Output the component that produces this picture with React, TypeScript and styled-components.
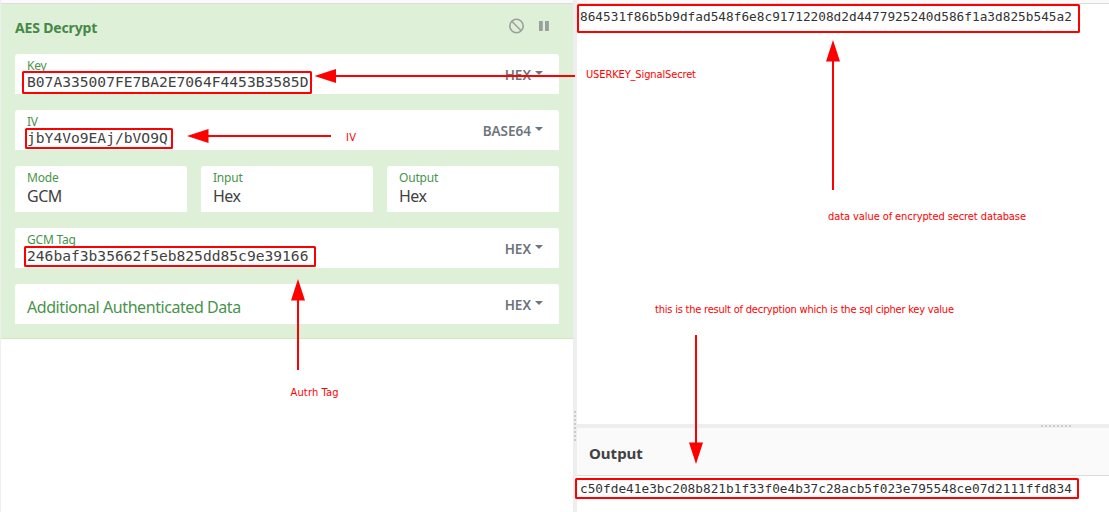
import React from 'react';
import styled, { createGlobalStyle } from 'styled-components';

const GlobalStyle = createGlobalStyle`
  * { box-sizing: border-box; }
  body {
    margin: 0;
    background: #fff;
    font-family: "Noto Sans", "Open Sans", sans-serif;
    color: #424242;
    overflow: hidden;
  }
`;

const Page = styled.div`
  position: relative;
  display: flex;
  width: 1109px;
  height: 512px;
  overflow: hidden;
  white-space: nowrap;
`;

const RecipePane = styled.section`
  width: 573px;
  border-left: 1px solid #eee;
`;

const PaneTop = styled.div`
  height: 4px;
  background: #fafafa;
  border-bottom: 1px solid #ddd;
`;

const Operation = styled.div`
  display: flex;
  flex-direction: column;
  gap: 16px;
  height: 335px;
  padding: 13px 14px 0;
  background: #dff0d8;
  border-bottom: 1px solid #d0e6bd;
`;

const OperationHead = styled.div`
  display: flex;
  justify-content: space-between;
  align-items: center;
  height: 21px;
`;

const Title = styled.h2`
  margin: 0;
  font-size: 14px;
  line-height: 20px;
  font-weight: 700;
  letter-spacing: -0.16px;
  color: #468847;
`;

const HeadIcons = styled.div`
  display: flex;
  align-items: center;
  gap: 14px;
  margin-top: -3px;
  padding-right: 10px;
`;

const Field = styled.div`
  display: flex;
  justify-content: space-between;
  height: 40px;
  padding: 0 16px 0 12px;
  background: #fff;
  border-radius: 3px 3px 0 0;
`;

const FieldBody = styled.div`
  display: flex;
  flex-direction: column;
  padding-top: 4px;
`;

const Label = styled.span`
  font-size: 12px;
  line-height: 16px;
  letter-spacing: -0.2px;
  color: #48944b;
`;

const MonoValue = styled.span`
  font-family: "DejaVu Sans Mono", monospace;
  font-size: 14.62px;
  line-height: 15px;
`;

const Placeholder = styled.span`
  padding-top: 11px;
  font-size: 16px;
  line-height: 24px;
  letter-spacing: -0.43px;
  color: #48944b;
`;

const Encoding = styled.span`
  display: flex;
  align-items: center;
  gap: 4px;
  height: 42px;
  font-size: 13.5px;
  font-weight: 600;
  letter-spacing: 0;
  color: #6c757d;
  &::after {
    content: "";
    border: 4px solid transparent;
    border-top-color: #6c757d;
    border-bottom: 0;
    margin-top: -4px;
  }
`;

const SelectRow = styled.div`
  display: grid;
  grid-template-columns: repeat(3, 1fr);
  gap: 14px;
`;

const SelectField = styled(Field)`
  height: 46px;
`;

const SelectValue = styled.span`
  font-size: 16px;
  line-height: 20px;
  letter-spacing: -0.5px;
`;

const Gutter = styled.div`
  display: flex;
  flex-direction: column;
  align-items: center;
  width: 4px;
  padding-top: 411px;
  background: #eee;
`;

const Dots = styled.div<{ $vertical?: boolean }>`
  width: ${p => (p.$vertical ? '2px' : '30px')};
  height: ${p => (p.$vertical ? '30px' : '2px')};
  background: repeating-linear-gradient(
    ${p => (p.$vertical ? '180deg' : '90deg')}, #ccc 0 2px, transparent 2px 4px
  );
`;

const IoPane = styled.section`
  display: flex;
  flex-direction: column;
  flex: 1;
`;

const InputText = styled.div`
  height: 420px;
  padding: 4px 3px;
`;

const IoText = styled.span`
  display: block;
  font-family: "DejaVu Sans Mono", monospace;
  font-size: 12.78px;
  line-height: 18px;
  color: #333;
`;

const RowGutter = styled.div`
  display: flex;
  justify-content: flex-end;
  align-items: center;
  height: 4px;
  padding-right: 38px;
  background: #eee;
`;

const OutputHead = styled.h2`
  height: 48px;
  margin: 0;
  padding: 0 12px;
  background: #fafafa;
  border-bottom: 1px solid #ddd;
  font-size: 15px;
  line-height: 50px;
`;

const OutputText = styled.div`
  padding: 4px 3px;
`;

const Markup = styled.svg`
  position: absolute;
  inset: 0;
  pointer-events: none;
  font-family: "DejaVu Sans Condensed", "DejaVu Sans", sans-serif;
  font-stretch: condensed;
  font-size: 11px;
  fill: #f00;
`;

const boxes = [
  [22, 71, 290, 23],
  [25, 128, 148, 21],
  [24, 246, 292, 21],
  [577, 4, 503, 29],
  [575, 478, 504, 21],
];

const arrows = [
  { x: 314.5, y: 76, angle: 0, length: 260.5 },
  { x: 187, y: 136, angle: 0, length: 144 },
  { x: 298, y: 279, angle: 90, length: 91 },
  { x: 833, y: 40, angle: 90, length: 150 },
  { x: 696, y: 464, angle: 270, length: 129 },
];

const notes = [
  { x: 586, y: 78, width: 110, text: 'USERKEY_SignalSecret' },
  { x: 346, y: 141, width: 10, text: 'IV' },
  { x: 828, y: 220, width: 198, text: 'data value of encrypted secret database' },
  { x: 655, y: 313, width: 299, text: 'this is the result of decryption which is the sql cipher key value' },
  { x: 290.5, y: 396, width: 48, text: 'Autrh Tag' },
];

function Annotations() {
  return (
    <Markup width="1109" height="512" viewBox="0 0 1109 512">
      {boxes.map(([x, y, w, h]) => (
        <rect key={y} x={x + 1} y={y + 1} width={w - 2} height={h - 2} rx="0.5" fill="none" stroke="#f00" strokeWidth="2" />
      ))}
      {arrows.map(a => (
        <g key={a.x} transform={`translate(${a.x} ${a.y}) rotate(${a.angle})`}>
          <path d={`M0 0 L21.5 -7 V-1 H${a.length} V1 H21.5 V7 Z`} />
        </g>
      ))}
      {notes.map(n => (
        <text key={n.text} x={n.x} y={n.y} textLength={n.width}>{n.text}</text>
      ))}
    </Markup>
  );
}

function InputArg({ label, value, encoding }: { label: string; value?: string; encoding: string }) {
  return (
    <Field>
      {value ? (
        <FieldBody>
          <Label>{label}</Label>
          <MonoValue>{value}</MonoValue>
        </FieldBody>
      ) : (
        <Placeholder>{label}</Placeholder>
      )}
      <Encoding>{encoding}</Encoding>
    </Field>
  );
}

function SelectArg({ label, value }: { label: string; value: string }) {
  return (
    <SelectField>
      <FieldBody>
        <Label>{label}</Label>
        <SelectValue>{value}</SelectValue>
      </FieldBody>
    </SelectField>
  );
}

export default function App() {
  return (
    <Page>
      <GlobalStyle />
      <RecipePane>
        <PaneTop />
        <Operation>
          <OperationHead>
            <Title>AES Decrypt</Title>
            <HeadIcons>
              <svg width="16" height="16" viewBox="0 0 16 16" fill="none" stroke="#9c9f9b" strokeWidth="1.6">
                <circle cx="7.5" cy="8" r="6.7" />
                <path d="M2.8 3.3 12.2 12.7" />
              </svg>
              <svg width="10" height="10" viewBox="0 0 10 10" fill="#9c9f9b">
                <path d="M0 0H3.8V10H0ZM6 0H9.9V10H6Z" />
              </svg>
            </HeadIcons>
          </OperationHead>
          <InputArg label="Key" value="B07A335007FE7BA2E7064F4453B3585D" encoding="HEX" />
          <InputArg label="IV" value="jbY4Vo9EAj/bVO9Q" encoding="BASE64" />
          <SelectRow>
            <SelectArg label="Mode" value="GCM" />
            <SelectArg label="Input" value="Hex" />
            <SelectArg label="Output" value="Hex" />
          </SelectRow>
          <InputArg label="GCM Tag" value="246baf3b35662f5eb825dd85c9e39166" encoding="HEX" />
          <InputArg label="Additional Authenticated Data" encoding="HEX" />
        </Operation>
      </RecipePane>
      <Gutter>
        <Dots $vertical />
      </Gutter>
      <IoPane>
        <PaneTop />
        <InputText>
          <IoText>864531f86b5b9dfad548f6e8c91712208d2d4477925240d586f1a3d825b545a2</IoText>
        </InputText>
        <RowGutter>
          <Dots />
        </RowGutter>
        <OutputHead>Output</OutputHead>
        <OutputText>
          <IoText>c50fde41e3bc208b821b1f33f0e4b37c28acb5f023e795548ce07d2111ffd834</IoText>
        </OutputText>
      </IoPane>
      <Annotations />
    </Page>
  );
}
